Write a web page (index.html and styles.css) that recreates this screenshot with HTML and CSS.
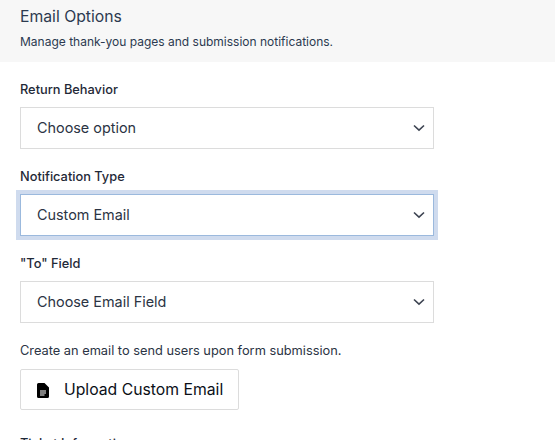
FILE: index.html
```html
<!DOCTYPE html>
<html lang="en">
<head>
  <meta charset="UTF-8" />
  <title>Email Options</title>
  <link rel="stylesheet" href="styles.css">
</head>
<body>
  <div class="header">
    <h1>Email Options</h1>
    <p>Manage thank-you pages and submission notifications.</p>
  </div>

  <div class="content">
    <div class="field">
      <label>Return Behavior</label>
      <div class="select">
        <span>Choose option</span>
        <svg class="chevron" width="12" height="8" viewBox="0 0 12 8"><path d="M1 1.5 6 6.2 11 1.5" /></svg>
      </div>
    </div>

    <div class="field">
      <label>Notification Type</label>
      <div class="select focused">
        <span>Custom Email</span>
        <svg class="chevron" width="12" height="8" viewBox="0 0 12 8"><path d="M1 1.5 6 6.2 11 1.5" /></svg>
      </div>
    </div>

    <div class="field">
      <label>"To" Field</label>
      <div class="select">
        <span>Choose Email Field</span>
        <svg class="chevron" width="12" height="8" viewBox="0 0 12 8"><path d="M1 1.5 6 6.2 11 1.5" /></svg>
      </div>
    </div>

    <p class="hint">Create an email to send users upon form submission.</p>
    <button class="upload">
      <svg class="file-icon" width="12" height="15" viewBox="0 0 12 15"><path fill="#000" fill-rule="evenodd" d="M1.5 0H7.5L12 4.5V13.5A1.5 1.5 0 0 1 10.5 15H1.5A1.5 1.5 0 0 1 0 13.5V1.5A1.5 1.5 0 0 1 1.5 0ZM3 7.5V8.5H9V7.5ZM3 9.5V10.5H9V9.5ZM3 11.5V12.5H7.5V11.5Z" /></svg>
      Upload Custom Email
    </button>

    <label class="next">Ticket Information</label>
  </div>
</body>
</html>
```

FILE: styles.css
```css
* { box-sizing: border-box; margin: 0; padding: 0; }
html, body { height: 100%; overflow: hidden; }
body {
  font-family: Inter, 'Liberation Sans', sans-serif;
  background: #fff; color: #2b3444;
}
.header {
  background: #f7f7f7; height: 62px;
  padding: 7px 20px 0;
}
.header h1 { font-size: 15.75px; font-weight: 400; line-height: 20px; color: #2c3a50; }
.header p { font-size: 12px; line-height: 16px; margin-top: 7px; color: #2c3a50; }
.content { padding: 20px 20px 0; }
.field { margin-bottom: 20px; }
label { display: block; font-size: 12.8px; font-weight: 500; line-height: 16px; color: #1f2937; margin-bottom: 9px; }
.select {
  display: flex; justify-content: space-between; align-items: center;
  width: 414px; height: 42px; padding: 0 8px 0 16px;
  background: #fff; border: 1px solid #dcdcdc;
  font-size: 14.4px; color: #2b3444;
}
.select span { margin-top: -1px; }
.select.focused { border-color: #9bb9dd; box-shadow: 0 0 0 4px #cfdbee; }
.chevron { fill: none; stroke: #3d4452; stroke-width: 1.6; }
.hint { font-size: 12.8px; line-height: 16px; margin-top: 20px; color: #2b3444; }
.upload {
  display: flex; align-items: center; gap: 15px;
  width: 219px; height: 41px; margin-top: 10px; padding: 0 0 0 16px;
  background: #fff; border: 1px solid #dcdcdc; border-radius: 2px;
  font-family: inherit; font-size: 15.75px; color: #0b0f17; white-space: nowrap;
}
.file-icon { margin-top: 2px; }
.next { margin-top: 26px; }
```
